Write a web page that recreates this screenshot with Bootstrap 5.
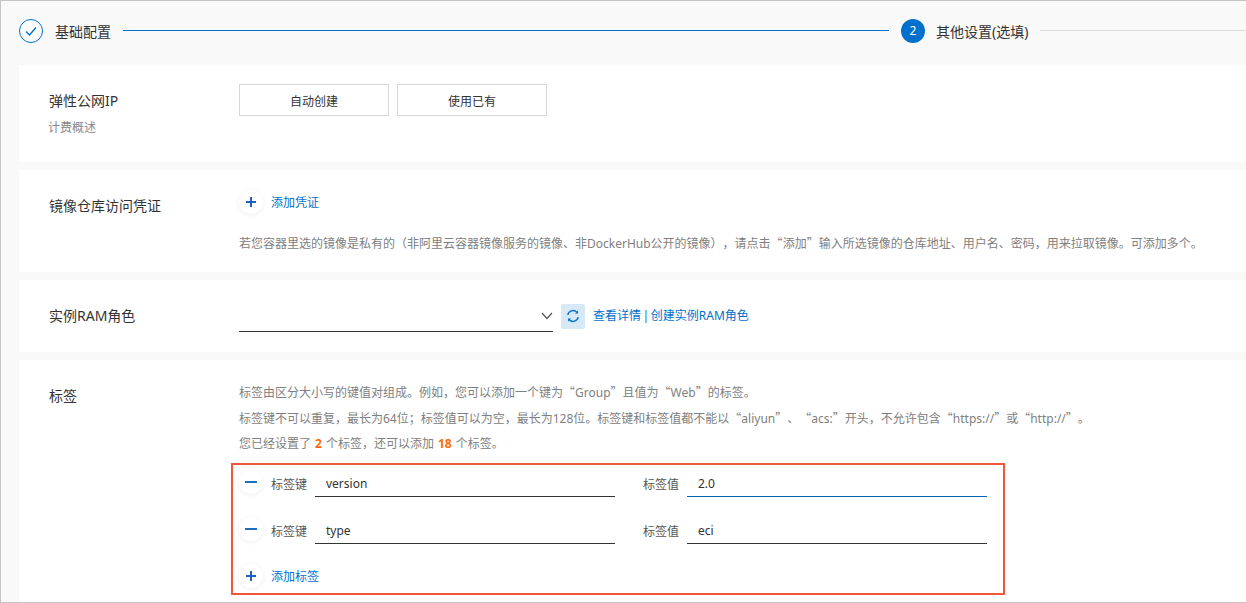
<!DOCTYPE html>
<html lang="zh-CN">
<head>
<meta charset="utf-8">
<title>标签设置</title>
<link rel="stylesheet" href="https://cdn.jsdelivr.net/npm/bootstrap@5.3.0/dist/css/bootstrap.min.css">
<style>
html,body{height:100%;}
body{background:#fff;font-family:"Noto Sans","Noto Sans CJK SC",sans-serif;font-size:12px;color:#333;overflow:hidden;text-spacing-trim:space-all;}
.frame{height:603px;background:#f9f9f9;border:solid #c4c4c4;border-width:1px 0 1px 1px;padding-left:18px;overflow:hidden;}
.steps{height:64px;padding-top:18px;}
.step-ico{width:24px;height:24px;border-radius:50%;flex:none;}
.step-done{border:1px solid #0070cc;background:#fff;color:#0070cc;}
.step-now{background:#0070cc;color:#fff;font-size:12px;line-height:24px;text-align:center;margin-left:12px;}
.step-text{font-size:14px;line-height:26px;margin:0 12px;white-space:nowrap;}
.step-now + .step-text{margin-left:11px;}
.line{height:1px;margin-top:11px;}
.line-on{background:#0070cc;width:766px;flex:none;}
.line-off{background:#dcdcdc;flex:1;}
.sec{background:#fff;margin-bottom:8px;display:flex;}
.sec-label{width:220px;flex:none;padding-left:30px;font-size:14px;line-height:20px;}
.sec-sub{font-size:12px;color:#888;margin-top:7px;line-height:20px;margin-left:-1px;}
.s1{height:97px;padding-top:26px;}
.s2{height:102px;padding-top:20px;}
.s2 .sec-label{padding-top:6px;}
.s3{height:72px;}
.s4{height:260px;padding-top:19px;}
.s4 .sec-label{padding-top:7px;}
.btns{margin-top:-7px;height:32px;}
.pick{width:150px;height:32px;border:1px solid #d7d7d7;border-radius:0;font-size:12px;color:#333;padding:3px 0 0;background:#fff;}
.round{width:24px;height:24px;border-radius:50%;background:#fff;box-shadow:0 1px 5px rgba(0,0,0,.07);flex:none;display:flex;align-items:center;justify-content:center;}
a.lk{color:#0070cc;text-decoration:none;font-size:12px;margin-left:8px;padding-top:2px;}
.links{word-spacing:-1.5px;margin-left:0 !important;padding-top:0 !important;}
.hint{color:#808080;font-size:12px;line-height:25px;white-space:nowrap;}
.s2 .hint{margin-top:16px;}
.q{font-family:"Noto Sans CJK SC",sans-serif;}
.select-box{width:314px;height:32px;border-bottom:1px solid #333;display:flex;justify-content:flex-end;align-items:center;}
.refresh{width:24px;height:25px;background:#d7e9f6;border-radius:2px;display:flex;align-items:center;justify-content:center;margin:0 8px;}
.num{color:#ff6a00;font-weight:700;margin:0 4px;}
.tagbox{width:774px;height:132px;border:2px solid #f0563a;margin-top:7px;margin-left:-8px;padding:0 0 0 6px;}
.tag-row{display:flex;height:47px;padding-top:5px;align-items:flex-start;}
.tag-name{width:44px;margin-left:8px;flex:none;line-height:29px;font-size:12px;color:#555;white-space:nowrap;}
.tag-name.v{margin-left:0;}
.tag-in{height:27px;border:0;border-bottom:1px solid #333;border-radius:0;padding:0 11px;font-size:12px;color:#333;background:transparent;flex:none;}
.w1{width:300px;margin-right:28px;}
.w2{width:300px;}
.focus{border-bottom-color:#0064b0;}
.add{margin-top:5px;}
</style>
</head>
<body>
<div class="frame">
  <div class="steps d-flex">
    <div class="step-ico step-done d-flex align-items-center justify-content-center">
      <svg width="14" height="12" viewBox="0 0 14 12" fill="none"><path d="M2 6.5 5.5 10 12 2.5" stroke="#0070cc" stroke-width="1.4"/></svg>
    </div>
    <span class="step-text">基础配置</span>
    <div class="line line-on"></div>
    <div class="step-ico step-now">2</div>
    <span class="step-text">其他设置(选填)</span>
    <div class="line line-off"></div>
  </div>

  <section class="sec s1">
    <div class="sec-label">弹性公网IP<div class="sec-sub">计费概述</div></div>
    <div class="btns d-flex gap-2">
      <button type="button" class="btn pick">自动创建</button>
      <button type="button" class="btn pick">使用已有</button>
    </div>
  </section>

  <section class="sec s2">
    <div class="sec-label">镜像仓库访问凭证</div>
    <div>
      <div class="d-flex align-items-center">
        <span class="round"><svg width="12" height="12" viewBox="0 0 12 12"><path d="M6 1v10M1 6h10" stroke="#1f5fbf" stroke-width="2"/></svg></span>
        <a class="lk" href="#">添加凭证</a>
      </div>
      <div class="hint">若您容器里选的镜像是私有的（非阿里云容器镜像服务的镜像、非DockerHub公开的镜像），请点击<span class="q">“</span>添加<span class="q">”</span>输入所选镜像的仓库地址、用户名、密码，用来拉取镜像。可添加多个。</div>
    </div>
  </section>

  <section class="sec s3 align-items-center">
    <div class="sec-label">实例RAM角色</div>
    <div class="d-flex align-items-center">
      <div class="select-box">
        <svg width="12" height="8" viewBox="0 0 12 8" fill="none"><path d="M1 1l5 5.5L11 1" stroke="#555" stroke-width="1.2"/></svg>
      </div>
      <div class="refresh">
        <svg width="14" height="14" viewBox="0 0 14 14" fill="none"><path d="M1.8 6A5.3 5.3 0 0 1 10.8 3.2M12.2 8A5.3 5.3 0 0 1 3.2 10.8" stroke="#0070cc" stroke-width="1.4"/><path d="M9 4.4h3V1.4z M5 9.6H2v3z" fill="#0070cc"/></svg>
      </div>
      <a class="lk links" href="#">查看详情 | 创建实例RAM角色</a>
    </div>
  </section>

  <section class="sec s4">
    <div class="sec-label">标签</div>
    <div>
      <div class="hint">标签由区分大小写的键值对组成。例如，您可以添加一个键为<span class="q">“</span>Group<span class="q">”</span>且值为<span class="q">“</span>Web<span class="q">”</span>的标签。</div>
      <div class="hint">标签键不可以重复，最长为64位；标签值可以为空，最长为128位。标签键和标签值都不能以<span class="q">“</span>aliyun<span class="q">”</span>、<span class="q">“</span>acs:<span class="q">”</span>开头，不允许包含<span class="q">“</span>https://<span class="q">”</span>或<span class="q">“</span>http://<span class="q">”</span>。</div>
      <div class="hint">您已经设置了<span class="num">2</span>个标签，还可以添加<span class="num">18</span>个标签。</div>
      <div class="tagbox">
        <div class="tag-row">
          <span class="round"><svg width="12" height="2" viewBox="0 0 12 2"><path d="M0 1h12" stroke="#1f6fc0" stroke-width="2"/></svg></span>
          <span class="tag-name">标签键</span>
          <input class="tag-in w1" value="version" aria-label="标签键">
          <span class="tag-name v">标签值</span>
          <input class="tag-in w2 focus" value="2.0" aria-label="标签值">
        </div>
        <div class="tag-row">
          <span class="round"><svg width="12" height="2" viewBox="0 0 12 2"><path d="M0 1h12" stroke="#1f6fc0" stroke-width="2"/></svg></span>
          <span class="tag-name">标签键</span>
          <input class="tag-in w1" value="type" aria-label="标签键">
          <span class="tag-name v">标签值</span>
          <input class="tag-in w2" value="eci" aria-label="标签值">
        </div>
        <div class="add d-flex align-items-center">
          <span class="round"><svg width="12" height="12" viewBox="0 0 12 12"><path d="M6 1v10M1 6h10" stroke="#1f5fbf" stroke-width="2"/></svg></span>
          <a class="lk" href="#">添加标签</a>
        </div>
      </div>
    </div>
  </section>
</div>
<script src="https://cdn.jsdelivr.net/npm/bootstrap@5.3.0/dist/js/bootstrap.bundle.min.js"></script>
</body>
</html>
